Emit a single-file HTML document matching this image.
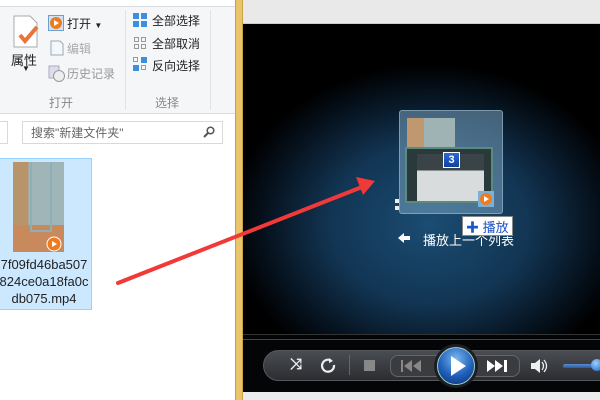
<!DOCTYPE html>
<html><head><meta charset="utf-8"><style>
*{margin:0;padding:0;box-sizing:border-box}
body{width:600px;height:400px;overflow:hidden;position:relative;background:#fff;font-family:"Liberation Sans","Noto Sans CJK SC",sans-serif;font-size:12px;color:#222}
.a{position:absolute}
.t{position:absolute;white-space:nowrap}
</style></head><body>
<!-- explorer ribbon -->
<div class="a" style="left:0;top:0;width:236px;height:7px;background:#fff;border-bottom:1px solid #dadbdc"></div>
<div class="a" style="left:0;top:7px;width:236px;height:107px;background:#f5f6f7;border-bottom:1px solid #dadbdc"></div>
<div class="a" style="left:125px;top:10px;width:1px;height:100px;background:#e2e3e4"></div>
<div class="a" style="left:210px;top:10px;width:1px;height:100px;background:#e2e3e4"></div>
<!-- properties icon -->
<svg class="a" style="left:12px;top:14px" width="28" height="36"><path d="M2 2h16l7 7v24H2z" fill="#fff" stroke="#aaa"/><path d="M8 21l5 6 12-14" stroke="#e8743b" stroke-width="4" fill="none"/></svg>
<div class="t" style="left:11px;top:50px;font-size:13px">属性</div>
<div class="t" style="left:22px;top:64px;font-size:8px">▼</div>
<svg class="a" style="left:48px;top:15px" width="16" height="16"><rect x="0.5" y="0.5" width="15" height="15" fill="#cfe4f6" stroke="#6a9fd0"/><circle cx="8" cy="8" r="6" fill="#f07b1c"/><path d="M6 5l5 3-5 3z" fill="#fff"/></svg>
<div class="t" style="left:67px;top:15px;font-size:12px">打开 <span style="font-size:8px">▼</span></div>
<svg class="a" style="left:50px;top:40px" width="14" height="16"><path d="M1 1h9l3 3v11H1z" fill="#f5f8fb" stroke="#9ab"/></svg>
<div class="t" style="left:67px;top:40px;color:#aaa">编辑</div>
<svg class="a" style="left:48px;top:65px" width="18" height="18"><rect x="1" y="1" width="10" height="12" fill="#dde" stroke="#aab"/><circle cx="11" cy="11" r="5.5" fill="#eee" stroke="#999"/></svg>
<div class="t" style="left:67px;top:65px;color:#999">历史记录</div>
<div class="t" style="left:49px;top:94px;color:#888">打开</div>
<svg class="a" style="left:133px;top:13px" width="14" height="14"><rect x="0" y="0" width="6" height="6" fill="#3d8ede"/><rect x="8" y="0" width="6" height="6" fill="#3d8ede"/><rect x="0" y="8" width="6" height="6" fill="#3d8ede"/><rect x="8" y="8" width="6" height="6" fill="#3d8ede"/></svg>
<div class="t" style="left:152px;top:12px">全部选择</div>
<svg class="a" style="left:134px;top:37px" width="12" height="12"><g fill="none" stroke="#999"><rect x=".5" y=".5" width="4" height="4"/><rect x="7.5" y=".5" width="4" height="4"/><rect x=".5" y="7.5" width="4" height="4"/><rect x="7.5" y="7.5" width="4" height="4"/></g></svg>
<div class="t" style="left:152px;top:35px">全部取消</div>
<svg class="a" style="left:133px;top:57px" width="14" height="14"><rect x="8" y="0" width="6" height="6" fill="#3d8ede"/><rect x="0" y="8" width="6" height="6" fill="#3d8ede"/><g fill="none" stroke="#999"><rect x=".5" y=".5" width="4" height="4"/><rect x="8.5" y="8.5" width="4" height="4"/></g></svg>
<div class="t" style="left:152px;top:57px">反向选择</div>
<div class="t" style="left:155px;top:94px;color:#888">选择</div>
<!-- address row -->
<div class="a" style="left:-5px;top:121px;width:13px;height:23px;border:1px solid #d9d9d9"></div>
<div class="a" style="left:22px;top:121px;width:201px;height:23px;border:1px solid #d9d9d9;background:#fff"></div>
<div class="t" style="left:31px;top:124px;color:#666">搜索"新建文件夹"</div>
<svg class="a" style="left:203px;top:126px" width="12" height="12"><circle cx="7.5" cy="4.5" r="3.3" fill="none" stroke="#555" stroke-width="1.5"/><path d="M5 7l-4 4" stroke="#555" stroke-width="2"/></svg>
<!-- file tile -->
<div class="a" style="left:-2px;top:158px;width:94px;height:152px;background:#cce8ff;border:1px solid #99d1ff"></div>
<div class="a" style="left:13px;top:162px;width:51px;height:90px;background:linear-gradient(90deg,#b8946a 0 30%,#9fb5b8 30% 100%)"></div>
<div class="a" style="left:13px;top:225px;width:51px;height:27px;background:#c88a5c"></div>
<div class="a" style="left:30px;top:162px;width:22px;height:70px;border:2px solid #8ab0b8;border-top:none"></div>
<svg class="a" style="left:46px;top:236px" width="16" height="16"><circle cx="8" cy="8" r="7" fill="#f07b1c" stroke="#fff"/><path d="M6 5l5 3-5 3z" fill="#fff"/></svg>
<div class="t" style="left:-4px;top:256px;font-size:13px;line-height:17px;text-align:center;width:96px">7f09fd46ba507<br>824ce0a18fa0c<br>db075.mp4</div>
<!-- yellow border -->
<div class="a" style="left:235px;top:0;width:8px;height:400px;background:#eac46a;border-left:1px solid #c9a040;border-right:1px solid #caa24a"></div>
<!-- player -->
<div class="a" style="left:243px;top:0;width:357px;height:24px;background:#e9e9e9;border-bottom:1px solid #ccc"></div>
<div class="a" style="left:243px;top:24px;width:357px;height:310px;background:radial-gradient(ellipse 220px 170px at 430px 220px,#1b4c72 0%,#123553 45%,#06121e 85%,#000 100%) ;background-attachment:scroll"></div>
<div class="a" style="left:243px;top:24px;width:357px;height:310px;background:radial-gradient(ellipse 200px 160px at 187px 200px,rgba(27,76,114,1) 0%,rgba(18,53,83,1) 50%,rgba(5,15,25,1) 85%,#000 100%)"></div>
<div class="a" style="left:243px;top:334px;width:357px;height:58px;background:#040506"></div>
<div class="a" style="left:243px;top:334px;width:357px;height:1px;background:#333"></div>
<div class="a" style="left:243px;top:339px;width:357px;height:1px;background:#444"></div>
<div class="a" style="left:243px;top:392px;width:357px;height:8px;background:#ececec"></div>
<!-- control bar -->
<div class="a" style="left:263px;top:350px;width:360px;height:31px;border-radius:16px;background:linear-gradient(#4a4d52,#2b2d31);border:1px solid #55585c"></div>
<div class="t" style="left:290px;top:356px;color:#eee;font-size:15px;font-weight:bold">⤨</div>
<svg class="a" style="left:320px;top:357px" width="16" height="16"><path d="M11 3.5A6 6 0 1 0 14 8" fill="none" stroke="#eee" stroke-width="2.2"/><path d="M9 1l4 3-4 2z" fill="#eee"/></svg>
<div class="a" style="left:349px;top:355px;width:1px;height:20px;background:#666"></div>
<div class="a" style="left:364px;top:360px;width:11px;height:11px;background:#888"></div>
<div class="a" style="left:390px;top:355px;width:130px;height:22px;border-radius:8px;border:1px solid #666;background:#3a3c40"></div>
<svg class="a" style="left:400px;top:359px" width="24" height="14"><rect x="1" y="1" width="2" height="12" fill="#888"/><path d="M12 1v12L4 7zM21 1v12L13 7z" fill="#888"/></svg>
<svg class="a" style="left:485px;top:359px" width="24" height="14"><path d="M2 1v12l8-6zM10 1v12l8-6z" fill="#fff"/><rect x="19" y="1" width="3" height="12" fill="#fff"/></svg>
<div class="a" style="left:434px;top:344px;width:44px;height:44px;border-radius:50%;background:#1c1e22"></div>
<div class="a" style="left:437px;top:347px;width:38px;height:38px;border-radius:50%;background:radial-gradient(circle at 50% 30%,#7ab6f0,#1f5fb8 55%,#0c2f70);border:1px solid #9cc"></div>
<svg class="a" style="left:449px;top:355px" width="18" height="22"><path d="M2 1l15 10L2 21z" fill="#fff"/></svg>
<svg class="a" style="left:530px;top:358px" width="18" height="16"><path d="M1 5h4l5-4v14l-5-4H1z" fill="#eee"/><path d="M12 4q3 4 0 8M14 2q5 6 0 12" stroke="#eee" fill="none" stroke-width="1.3"/></svg>
<div class="a" style="left:563px;top:364px;width:37px;height:4px;background:linear-gradient(#5a8cd0,#2a5aa0);border-radius:2px"></div>
<div class="a" style="left:591px;top:359px;width:12px;height:12px;border-radius:50%;background:radial-gradient(circle at 40% 35%,#9cd0ff,#1a5fc0)"></div>
<!-- drag box -->
<div class="a" style="left:399px;top:110px;width:104px;height:104px;border-radius:3px;background:rgba(120,160,190,0.55);border:1px solid rgba(160,190,210,0.6)"></div>
<div class="a" style="left:407px;top:118px;width:48px;height:68px;background:linear-gradient(90deg,#c09870 0 35%,#9fb3b5 35%)"></div>
<div class="a" style="left:405px;top:147px;width:88px;height:56px;background:#2a3a3a;border:2px solid #5a8a80"></div>
<div class="a" style="left:417px;top:154px;width:67px;height:47px;background:linear-gradient(#3a4448 0 35%,#d8dcdc 35%)"></div>
<div class="a" style="left:443px;top:152px;width:17px;height:16px;background:linear-gradient(#2a6ad8,#1040a0);border:1px solid #fff;color:#fff;font-weight:bold;font-size:11px;text-align:center;line-height:14px">3</div>
<svg class="a" style="left:478px;top:191px" width="16" height="16"><rect width="16" height="16" fill="#7ab0d8"/><circle cx="8" cy="8" r="6" fill="#f07b1c"/><path d="M6 5l5 3-5 3z" fill="#fff"/></svg>
<div class="a" style="left:395px;top:199px;width:4px;height:4px;background:#eee"></div>
<div class="a" style="left:395px;top:206px;width:4px;height:4px;background:#eee"></div>
<div class="t" style="left:423px;top:230px;color:#fff;font-size:13px">播放上一个列表</div>
<svg class="a" style="left:397px;top:232px" width="14" height="12"><path d="M1 6l6-5v3h6v4H7v3z" fill="#fff"/></svg>
<div class="a" style="left:462px;top:216px;width:51px;height:20px;background:#fff;border:1px solid #888"></div>
<div class="t" style="left:466px;top:217px;color:#1a50c8;font-size:13px"><b style="color:#1a58c8">✚</b> 播放</div>
<!-- red arrow -->
<svg class="a" style="left:0;top:0" width="600" height="400"><path d="M118 283L362 187" stroke="#f2393a" stroke-width="4" stroke-linecap="round"/><path d="M375 181L356 177L363 195z" fill="#f2393a"/></svg>
</body></html>
